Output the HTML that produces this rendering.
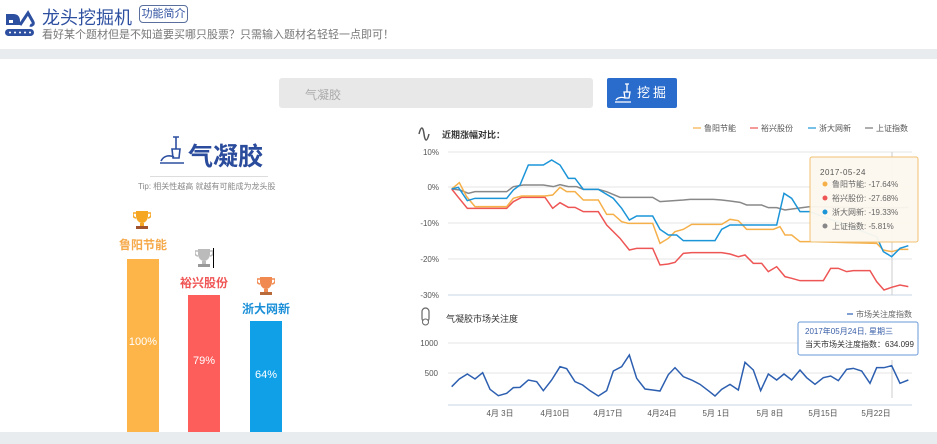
<!DOCTYPE html>
<html><head><meta charset="utf-8"><style>
*{margin:0;padding:0;box-sizing:border-box}
body{width:937px;height:444px;overflow:hidden;background:#fff;font-family:"Liberation Sans","Noto Sans CJK SC",sans-serif;position:relative}
.a{position:absolute;white-space:nowrap}
</style></head><body>
<div class="a" style="left:0;top:49px;width:937px;height:10px;background:#e9ecef"></div>
<div class="a" style="left:0;top:432px;width:937px;height:12px;background:#e9ecef"></div>
<!-- logo -->
<svg class="a" style="left:4px;top:10px" width="32" height="28" viewBox="0 0 32 28">
<path d="M2 4h7c5 0 7 3 7 7v4H2z" fill="#2d4fa0"/><path d="M16 15L24 3l5 9c1 2-1 4-3 3" fill="none" stroke="#2d4fa0" stroke-width="3"/>
<path d="M5 10h4v3H5z" fill="#fff"/>
<rect x="1" y="19" width="29" height="7" rx="3.5" fill="#2d4fa0"/>
<circle cx="6" cy="22.5" r="1" fill="#fff"/><circle cx="11" cy="22.5" r="1" fill="#fff"/><circle cx="16" cy="22.5" r="1" fill="#fff"/><circle cx="21" cy="22.5" r="1" fill="#fff"/><circle cx="26" cy="22.5" r="1" fill="#fff"/>
</svg>
<div class="a" style="left:42px;top:4px;font-size:18px;color:#2d4fa0">龙头挖掘机</div>
<div class="a" style="left:139px;top:5px;width:49px;height:18px;border:1px solid #5a6f9e;border-radius:4px;font-size:11px;line-height:16px;text-align:center;color:#2d4fa0">功能简介</div>
<div class="a" style="left:42px;top:26px;font-size:11px;color:#777">看好某个题材但是不知道要买哪只股票？只需输入题材名轻轻一点即可！</div>
<!-- search -->
<div class="a" style="left:279px;top:78px;width:314px;height:30px;background:#e8e8e8;border-radius:3px"></div>
<div class="a" style="left:305px;top:86px;font-size:12px;color:#aaa">气凝胶</div>
<div class="a" style="left:607px;top:78px;width:70px;height:30px;background:#2a6ccc;border-radius:2px;color:#fff;font-size:13px;line-height:30px;padding-left:30px;letter-spacing:3px">挖掘</div>
<svg class="a" style="left:613px;top:82px" width="22" height="22" viewBox="0 0 22 22" fill="none" stroke="#fff" stroke-width="1.3"><path d="M12 2h4M14 2v8M11 10h6l-1 6h-4z M3 18c2-3 6-3 9-2 M2 20h16"/></svg>
<!-- title -->
<svg class="a" style="left:159px;top:135px" width="26" height="30" viewBox="0 0 26 30" fill="none" stroke="#2d4fa0" stroke-width="1.6"><path d="M14 2h6M17 2v12M13 14h8l-1 9h-6z M2 26c3-6 9-6 13-4 M1 28h24"/></svg>
<div class="a" style="left:188px;top:137px;font-size:25px;font-weight:bold;color:#2b4c9c">气凝胶</div>
<div class="a" style="left:150px;top:176px;width:118px;height:1px;background:#ddd"></div>
<div class="a" style="left:138px;top:181px;font-size:8px;color:#888">Tip: 相关性越高 就越有可能成为龙头股</div>
<!-- trophies -->
<svg class="a" style="left:133px;top:210px" width="18" height="20" viewBox="0 0 18 20"><path d="M3 1h12v5c0 4-3 7-6 7s-6-3-6-7z" fill="#f5a623"/><path d="M3 3H0v2c0 2 2 3 3 3M15 3h3v2c0 2-2 3-3 3" fill="none" stroke="#f5a623" stroke-width="1.5"/><rect x="7" y="13" width="4" height="3" fill="#f5a623"/><rect x="3" y="16" width="12" height="3" fill="#a0522d"/></svg>
<svg class="a" style="left:195px;top:248px" width="18" height="20" viewBox="0 0 18 20"><path d="M3 1h12v5c0 4-3 7-6 7s-6-3-6-7z" fill="#bbb"/><path d="M3 3H0v2c0 2 2 3 3 3M15 3h3v2c0 2-2 3-3 3" fill="none" stroke="#bbb" stroke-width="1.5"/><rect x="7" y="13" width="4" height="3" fill="#bbb"/><rect x="3" y="16" width="12" height="3" fill="#999"/></svg>
<div class="a" style="left:213px;top:248px;width:1px;height:20px;background:#000"></div>
<svg class="a" style="left:257px;top:276px" width="18" height="20" viewBox="0 0 18 20"><path d="M3 1h12v5c0 4-3 7-6 7s-6-3-6-7z" fill="#f08a50"/><path d="M3 3H0v2c0 2 2 3 3 3M15 3h3v2c0 2-2 3-3 3" fill="none" stroke="#f08a50" stroke-width="1.5"/><rect x="7" y="13" width="4" height="3" fill="#f08a50"/><rect x="3" y="16" width="12" height="3" fill="#b86a3a"/></svg>
<div class="a" style="left:117px;top:236px;width:52px;text-align:center;font-size:12px;font-weight:bold;color:#f5a94a">鲁阳节能</div>
<div class="a" style="left:178px;top:274px;width:52px;text-align:center;font-size:12px;font-weight:bold;color:#f05555">裕兴股份</div>
<div class="a" style="left:240px;top:300px;width:52px;text-align:center;font-size:12px;font-weight:bold;color:#1a8fd8">浙大网新</div>
<div class="a" style="left:127px;top:259px;width:32px;height:173px;background:#fdb54a"></div>
<div class="a" style="left:188px;top:295px;width:32px;height:137px;background:#fe5e5b"></div>
<div class="a" style="left:250px;top:321px;width:32px;height:111px;background:#10a0e8"></div>
<div class="a" style="left:127px;top:336px;width:32px;text-align:center;font-size:11px;color:#fff">100%</div>
<div class="a" style="left:188px;top:355px;width:32px;text-align:center;font-size:11px;color:#fff">79%</div>
<div class="a" style="left:250px;top:369px;width:32px;text-align:center;font-size:11px;color:#fff">64%</div>
<!-- charts -->
<svg class="a" style="left:0;top:0" width="937" height="444">
<g font-size="8" fill="#555" font-family="Liberation Sans,Noto Sans CJK SC,sans-serif">
<path d="M419 134c2-8 4-8 5 0s3 8 5 0" fill="none" stroke="#555" stroke-width="1.5"/>
<text x="442" y="138" font-size="9" font-weight="bold" fill="#333">近期涨幅对比：</text>
<g stroke-width="1.2"><line x1="693" y1="128" x2="701" y2="128" stroke="#f5b04a"/><line x1="750" y1="128" x2="758" y2="128" stroke="#ee5555"/><line x1="808" y1="128" x2="816" y2="128" stroke="#1c95d8"/><line x1="865" y1="128" x2="873" y2="128" stroke="#777"/></g>
<text x="704" y="131">鲁阳节能</text><text x="761" y="131">裕兴股份</text><text x="819" y="131">浙大网新</text><text x="876" y="131">上证指数</text>
<g stroke="#e4e4e4"><line x1="448" y1="152" x2="912" y2="152"/><line x1="448" y1="187" x2="912" y2="187"/><line x1="448" y1="223" x2="912" y2="223"/><line x1="448" y1="259" x2="912" y2="259"/></g>
<line x1="448" y1="295" x2="912" y2="295" stroke="#c8d4e4"/>
<g text-anchor="end"><text x="439" y="155">10%</text><text x="439" y="190">0%</text><text x="439" y="226">-10%</text><text x="439" y="262">-20%</text><text x="439" y="298">-30%</text></g>
<line x1="892" y1="152" x2="892" y2="295" stroke="#ccc"/>
<g transform="translate(410,110) scale(0.33333)" fill="none" stroke-width="4.5">
<polyline stroke="#888" points="125,237 150,240 175,250 195,245 290,245 310,230 340,225 400,225 430,230 450,224 475,230 500,230 520,238 565,238 590,245 630,262 728,262 750,275 820,270 840,268 910,268 935,270 960,273 990,277 1010,285 1055,285 1075,293 1100,293 1125,300 1160,295 1200,290 1300,292 1445,294 1495,292"/>
<polyline stroke="#ee5555" points="125,237 145,262 172,295 290,295 310,275 335,262 405,262 428,295 450,278 475,292 495,292 520,305 565,305 590,345 630,385 658,420 680,415 728,415 750,465 775,462 795,457 820,430 845,428 935,428 960,432 985,440 1005,435 1030,460 1055,460 1075,485 1100,470 1125,500 1145,505 1170,512 1240,512 1262,475 1285,475 1310,485 1330,482 1380,482 1400,515 1422,540 1445,532 1470,525 1495,530"/>
<polyline stroke="#f5b04a" points="125,237 148,218 170,260 195,290 290,290 310,265 335,258 405,258 428,255 450,232 470,245 495,245 520,270 565,270 590,313 610,313 635,335 655,340 728,340 750,400 775,385 795,365 820,358 845,343 935,343 960,328 985,332 1010,358 1090,358 1110,350 1125,375 1145,375 1170,395 1200,395 1400,400 1420,420 1445,425 1470,418 1495,418"/>
<polyline stroke="#1c95d8" points="125,237 145,232 172,272 195,265 290,265 310,240 330,225 355,165 400,165 425,150 450,165 475,205 495,205 520,238 565,238 610,265 635,295 658,330 680,318 728,318 750,358 775,375 800,375 820,392 915,392 935,358 960,345 1100,345 1122,250 1145,265 1170,305 1200,305 1400,380 1420,425 1445,440 1470,415 1495,407"/>
</g>
<rect x="810" y="157" width="108" height="85" rx="2" fill="#fdf8ee" fill-opacity="0.95" stroke="#f0c070"/>
<text x="820" y="175" fill="#555" font-size="8" letter-spacing="0.5">2017-05-24</text>
<g font-size="8" fill="#666"><circle cx="825" cy="184" r="2.5" fill="#f5b04a"/><text x="832" y="187">鲁阳节能: -17.64%</text>
<circle cx="825" cy="198" r="2.5" fill="#ee5555"/><text x="832" y="201">裕兴股份: -27.68%</text>
<circle cx="825" cy="212" r="2.5" fill="#1c95d8"/><text x="832" y="215">浙大网新: -19.33%</text>
<circle cx="825" cy="226" r="2.5" fill="#888"/><text x="832" y="229">上证指数: -5.81%</text></g>
<!-- chart 2 -->
<rect x="422" y="308" width="7" height="14" rx="3.5" fill="none" stroke="#666" stroke-width="1.2"/><circle cx="425.5" cy="322" r="3" fill="#fff" stroke="#666"/>
<text x="446" y="322" font-size="9" fill="#333">气凝胶市场关注度</text>
<line x1="847" y1="314" x2="853" y2="314" stroke="#2d5fb0" stroke-width="1.2"/><text x="856" y="317" fill="#666">市场关注度指数</text>
<line x1="448" y1="343" x2="912" y2="343" stroke="#e4e4e4"/><line x1="448" y1="373" x2="912" y2="373" stroke="#e4e4e4"/>
<line x1="448" y1="405" x2="912" y2="405" stroke="#c8d4e4"/>
<g text-anchor="end"><text x="438" y="346">1000</text><text x="438" y="376">500</text></g>
<g text-anchor="middle"><text x="500" y="416">4月 3日</text><text x="555" y="416">4月10日</text><text x="608" y="416">4月17日</text><text x="662" y="416">4月24日</text><text x="716" y="416">5月 1日</text><text x="770" y="416">5月 8日</text><text x="823" y="416">5月15日</text><text x="876" y="416">5月22日</text></g>
<line x1="892" y1="360" x2="892" y2="398" stroke="#ccc"/>
<g transform="translate(410,300) scale(0.33333)"><polyline fill="none" stroke="#2d5fb0" stroke-width="4.5" points="125,260 148,237 172,222 195,237 218,218 240,268 265,287 290,280 310,263 330,262 355,240 380,245 400,272 425,240 450,200 470,206 495,245 518,255 540,272 565,288 590,272 610,213 635,200 658,165 680,235 705,267 728,270 750,273 775,224 795,203 820,230 845,240 870,253 895,272 915,288 935,268 960,253 985,270 1005,187 1030,210 1052,272 1075,222 1100,240 1122,222 1145,240 1170,210 1190,233 1215,253 1240,233 1262,228 1285,242 1310,208 1330,205 1355,213 1380,250 1400,203 1422,203 1445,197 1470,250 1495,240"/></g>
<rect x="798" y="322" width="120" height="33" rx="2" fill="#fff" stroke="#6a9ad8"/>
<text x="805" y="334" fill="#3a5fa8" font-size="8">2017年05月24日, 星期三</text>
<text x="805" y="347" fill="#333" font-size="8">当天市场关注度指数：634.099</text>
</g>
</svg>
</body></html>
